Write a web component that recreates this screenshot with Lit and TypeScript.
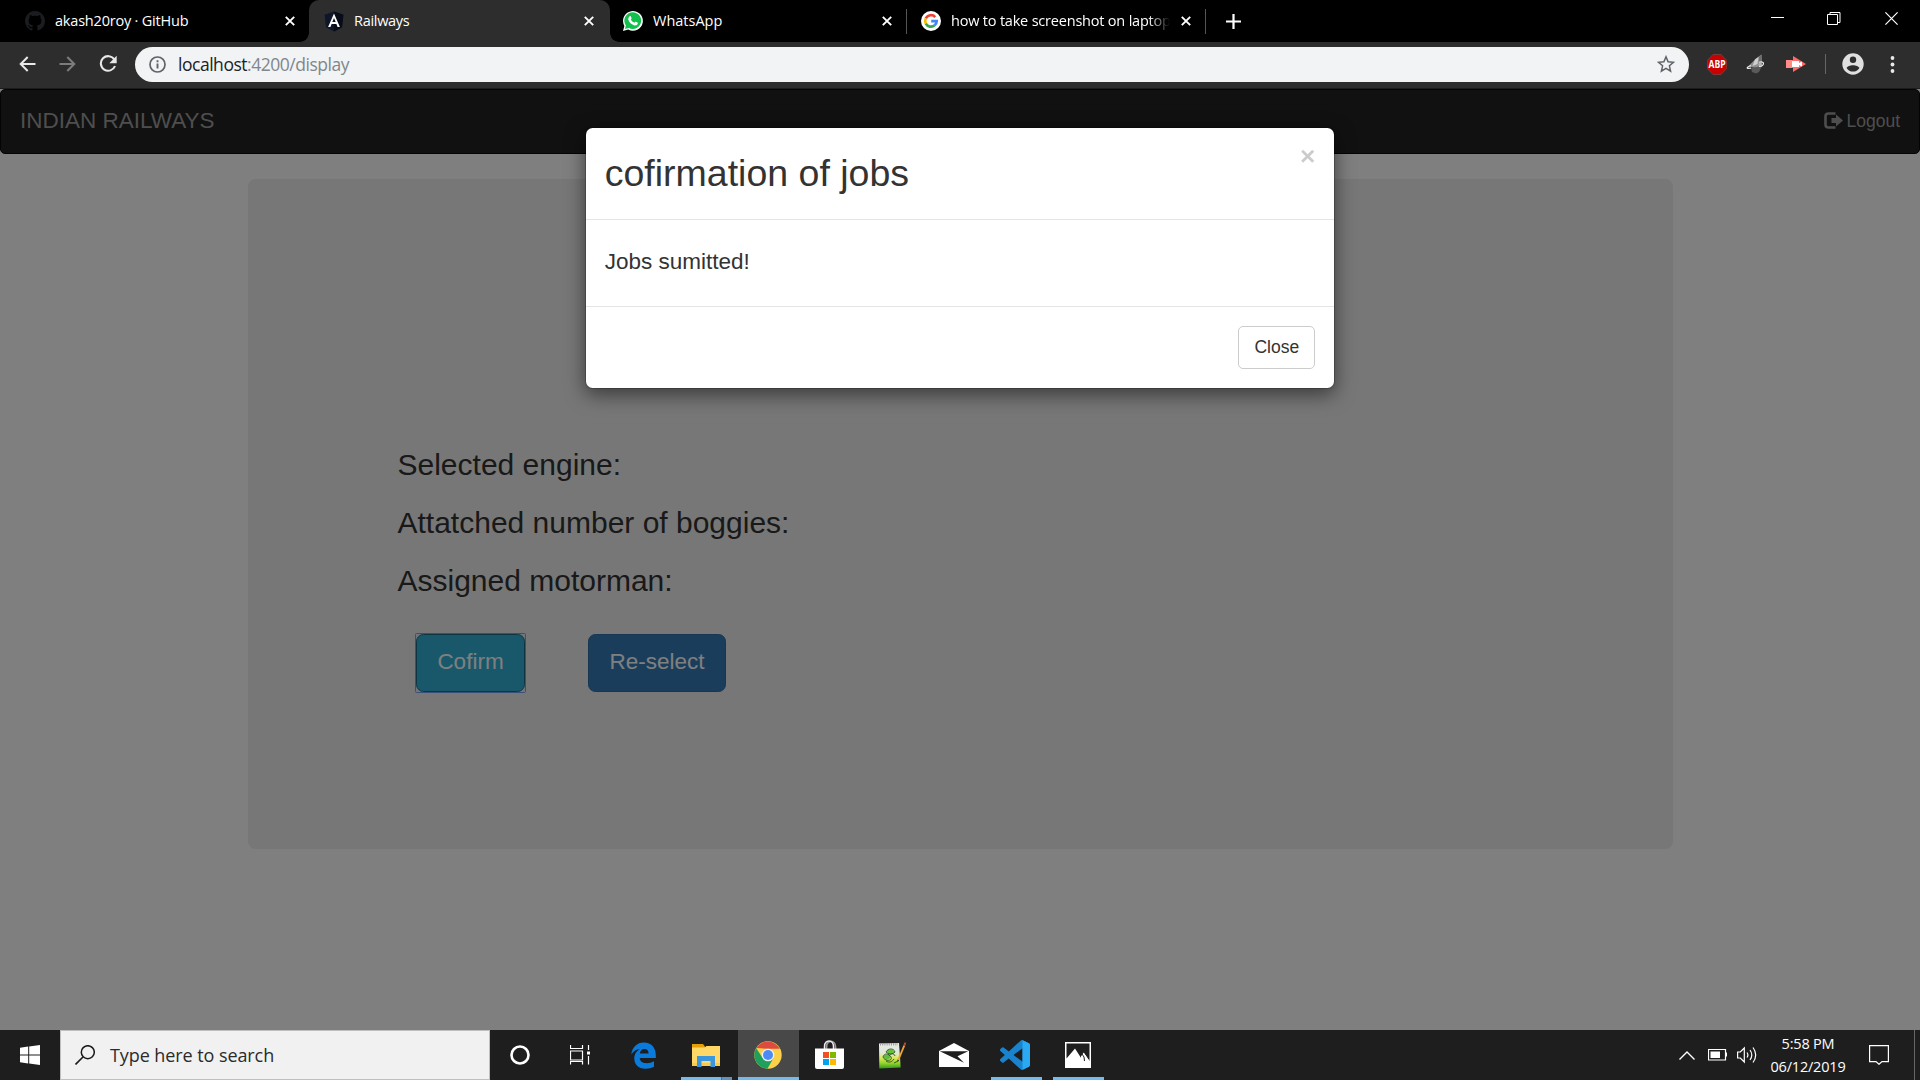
import { LitElement, html, css, svg, TemplateResult } from "lit";
import { customElement } from "lit/decorators.js";

const icon = (w: number, h: number, body: TemplateResult, box = `0 0 ${w} ${h}`) =>
  html`<svg width=${w} height=${h} viewBox=${box} fill="none">${body}</svg>`;

const tabClose = () =>
  icon(10, 10, svg`<path d="M.8.8l8.4 8.4M9.2.8L.8 9.2" stroke="#fff" stroke-width="1.9"/>`);

const githubIcon = () =>
  icon(20, 20, svg`<path fill="#1b1c1f" fill-rule="evenodd" d="M8 0C3.58 0 0 3.58 0 8c0 3.54 2.29 6.53 5.47 7.59.4.07.55-.17.55-.38 0-.19-.01-.82-.01-1.49-2.01.37-2.53-.49-2.69-.94-.09-.23-.48-.94-.82-1.13-.28-.15-.68-.52-.01-.53.63-.01 1.08.58 1.23.82.72 1.21 1.87.87 2.33.66.07-.52.28-.87.51-1.07-1.78-.2-3.64-.89-3.64-3.95 0-.87.31-1.59.82-2.15-.08-.2-.36-1.02.08-2.12 0 0 .67-.21 2.2.82.64-.18 1.32-.27 2-.27s1.36.09 2 .27c1.53-1.04 2.2-.82 2.2-.82.44 1.1.16 1.92.08 2.12.51.56.82 1.27.82 2.15 0 3.07-1.87 3.75-3.65 3.95.29.25.54.73.54 1.48 0 1.07-.01 1.93-.01 2.2 0 .21.15.46.55.38A8.01 8.01 0 0 0 16 8c0-4.42-3.58-8-8-8z"/>`, "0 0 16 16");

const angularIcon = () =>
  icon(20, 21, svg`<path fill="#10162a" d="M10 .5L.6 3.8 2 16.2l8 4.3 8-4.3 1.4-12.4z"/><path fill="#080b18" d="M10 .5v20l8-4.3 1.4-12.4z"/><path fill="#fff" fill-rule="evenodd" d="M10 2.6L4.1 16h2.3l1.2-3h4.8l1.2 3h2.3zm0 4.3l1.7 4.2H8.3z"/>`);

const whatsappIcon = () =>
  icon(20, 20, svg`<path fill="#fff" d="M0 20l1.4-5.1A9.9 9.9 0 1 1 5.2 18.6z"/><path fill="#12c14b" d="M1.9 18.1l1-3.6a8.4 8.4 0 1 1 3 2.6z"/><path fill="#fff" d="M6.7 5.3c.3-.3.9-.4 1.1.1l.8 1.9c.1.5-.5 1-.8 1.3.8 1.5 1.9 2.5 3.5 3.2.4-.4.8-1.2 1.3-1.1l1.9.9c.5.3.3 1.2 0 1.7-.8 1.2-2.3 1.4-3.6.9-2.6-.9-4.5-2.7-5.5-5.2-.4-1.3.2-2.9 1.3-3.7z"/>`);

const googleIcon = () =>
  icon(20, 20, svg`<circle cx="10" cy="10" r="10" fill="#fff"/><g stroke-width="2.7"><path stroke="#ea4335" d="M14.3 6.1A5.8 5.8 0 0 0 4.8 7.4"/><path stroke="#fbbc05" d="M4.8 7.4a5.8 5.8 0 0 0 0 5.2"/><path stroke="#34a853" d="M4.8 12.6a5.8 5.8 0 0 0 8.9 1.7"/><path stroke="#4285f4" d="M13.7 14.3c1.3-1.1 2-2.5 2-4.2H10.2"/></g>`);

const chromeIcon = () =>
  icon(28, 28, svg`<circle cx="14" cy="14" r="13.7" fill="#fdd04a"/><path fill="#dd4b3e" d="M2.2 7A13.7 13.7 0 0 1 25.9 7.8H14z"/><path fill="#1fa15d" d="M2.2 7A13.7 13.7 0 0 0 13.4 27.7L19.4 17.2 8.6 17z"/><circle cx="14" cy="14" r="6.3" fill="#f1f1f1"/><circle cx="14" cy="14" r="5" fill="#4c8bf5"/>`);

const edgeIcon = () =>
  icon(25, 27, svg`<path fill="#0a7bdb" fill-rule="evenodd" d="M.3 12.4C1.2 5.3 6 .5 12.8.5 20.5.5 24.8 6 24.8 12.9v3.2H8.7c.2 3.6 3.3 5.2 7 5.2 2.7 0 5.2-.8 7.3-2v5.5c-2.2 1.2-5.2 1.9-8.6 1.9C7.2 26.7 3.3 22.1 3.3 16.5c0-4.2 2.2-7.7 5.8-9.5C5.5 7.3 2.4 9.2.3 12.4zM8.8 11.5h8.8c0-2.7-1.3-4.6-4.2-4.6-2.6 0-4.2 2-4.6 4.6z"/>`);

const explorerIcon = () =>
  icon(28, 24, svg`<path fill="#e3a008" d="M0 1h11l2 2.5V6H0z"/><path fill="#ffd868" d="M0 4.5h12.5L14.5 3H28v20H0z"/><path fill="#f7cb4d" d="M0 20h28v3H0z"/><path fill="#3a96dd" d="M5 24V13h18v11h-4.5v-6h-9v6z"/>`);

const storeIcon = () =>
  icon(29, 30, svg`<path stroke="#999" stroke-width="1.8" d="M11.5 9V7c0-8 9-7 9 0v2"/><path stroke="#eee" stroke-width="1.5" d="M9.5 9V6.5C9.5-1 18.5-.5 18.5 6.5V9"/><path fill="#fff" d="M0 8.5h29V27q0 2-2 2H2q-2 0-2-2z"/><path fill="#f25022" d="M8 12h6v6H8z"/><path fill="#7fba00" d="M15 12h6v6h-6z"/><path fill="#00a4ef" d="M8 19h6v6H8z"/><path fill="#ffb900" d="M15 19h6v6h-6z"/>`);

const notepadIcon = () =>
  icon(28, 28, svg`<defs><linearGradient id="np" x1="0" y1="0" x2="0" y2="1"><stop offset="0" stop-color="#e9ebe9"/><stop offset=".4" stop-color="#dfe8d6"/><stop offset=".58" stop-color="#dcea5a"/><stop offset=".8" stop-color="#8fd32c"/><stop offset="1" stop-color="#2f9a1c"/></linearGradient></defs><path fill="url(#np)" d="M1 2.5l20-.5 1.7 24.5L1.3 27.5z"/><path stroke="#9a9a9a" stroke-dasharray="1 1.2" stroke-width="2.6" d="M2 3.3h18"/><ellipse cx="12.5" cy="10.5" rx="3.5" ry="2" fill="#5fc23a"/><ellipse cx="9" cy="16" rx="3.2" ry="2.4" fill="#63bd3c"/><path stroke="#2b4a22" stroke-width=".9" d="M8 11c2-4 8-4 9 0-3 3-7 2-9 0zM5 16c1-4 6-4 8 0s-6 5-8 0zM11 15c2-3 5-3 6 0M8 20c3 2 6 1 8-2M16 22l3-1.5"/><path stroke="#eda53a" stroke-width="1.9" d="M20.3 19l6-14.500"/><path stroke="#b8493e" stroke-width="2" d="M26.3 4.5L27.5 1.5"/><path fill="#2b2b2b" d="M19.4 18.6l1.8.8-2 2z"/>`);

const mailIcon = () =>
  icon(30, 24, svg`<path fill="#fff" d="M0 8L15 0l15 8v16H0z"/><path fill="#1e1e1e" d="M.8 8.3h28.4l-10.7 4.9L25 19.8z"/>`);

const vscodeIcon = () =>
  icon(30, 30, svg`<path fill="#1a83cd" d="M23.15 2.587L18.21.21a1.494 1.494 0 0 0-1.705.29l-9.46 8.63-4.12-3.128a.999.999 0 0 0-1.276.057L.327 7.261A1 1 0 0 0 .326 8.74L3.899 12 .326 15.26a1 1 0 0 0 .001 1.479L1.65 17.94a.999.999 0 0 0 1.276.057l4.12-3.128 9.46 8.63a1.492 1.492 0 0 0 1.704.29l4.942-2.377A1.5 1.5 0 0 0 24 20.06V3.939a1.5 1.5 0 0 0-.85-1.352zm-5.146 14.861L10.826 12l7.178-5.448v10.896z"/><path fill="#2aa8f2" d="M18 .15l5.15 2.437A1.5 1.5 0 0 1 24 3.939V20.06a1.5 1.5 0 0 1-.85 1.362L18 23.85z"/>`, "0 0 24 24");

const photosIcon = () =>
  icon(26, 26, svg`<path fill="#fff" d="M0 0h26v26H0z"/><path fill="#1e1e1e" d="M1.5 1.5h23v17.6l-5.5-8-3 3.2 2 4.7L10 6.5 1.5 16.5z"/><path fill="#fff" d="M16 15l2.5-4.5 6 8.5V26H14z"/><path stroke="#1e1e1e" stroke-width="1" d="M17 12l2 3 .5 4"/>`);

const TABS = [
  { cls: "t1", icon: githubIcon, title: "akash20roy · GitHub" },
  { cls: "t2 active", icon: angularIcon, title: "Railways" },
  { cls: "t3", icon: whatsappIcon, title: "WhatsApp" },
  { cls: "t4", icon: googleIcon, title: "how to take screenshot on laptop" },
];

@customElement("browser-chrome")
class BrowserChrome extends LitElement {
  static styles = css`
    :host { display: block; font-family: "Open Sans", "Noto Sans", sans-serif; }
    svg { display: block; flex: none; }
    .strip { display: flex; height: 42px; background: #000; color: #fff; }
    .tab { display: flex; align-items: center; box-sizing: border-box; height: 42px; position: relative; }
    .t1 { width: 309px; padding: 0 14px 0 25px; }
    .t2 { width: 301px; padding: 0 16px 0 15px; }
    .t3 { width: 297px; padding: 0 15px 0 13px; }
    .t4 { width: 299px; padding: 0 15px 0 14px; }
    .active { background: #2d2d2d; border-radius: 10px 10px 0 0; }
    .active::before, .active::after {
      content: ""; position: absolute; bottom: 0; width: 9px; height: 9px;
    }
    .active::before { left: -9px; background: radial-gradient(circle at 0 0, transparent 8.5px, #2d2d2d 9px); }
    .active::after { right: -9px; background: radial-gradient(circle at 100% 0, transparent 8.5px, #2d2d2d 9px); }
    .title {
      flex: 1; min-width: 0; margin: 0 11px 1px 10px; overflow: hidden; white-space: nowrap;
      font-size: 14.5px; line-height: 20px; letter-spacing: -0.2px;
    }
    .t2 .title { letter-spacing: -0.3px; }
    .t3 .title { letter-spacing: 0; }
    .t4 .title { mask-image: linear-gradient(90deg, #000 90%, transparent); }
    .sep { width: 1px; height: 25px; margin: 9px 0 0 -1px; background: #555; }
    .plus { margin: 14px 0 0 20px; }
    .controls { margin-left: auto; display: flex; align-items: flex-start; gap: 43px; padding: 12px 22px 0 0; }
    .controls svg:last-child { margin-left: 1px; }
    .bar {
      display: flex; align-items: center; height: 47px; box-sizing: border-box; background: #2d2d2d;
      padding: 0 22px 2px 19px; border-bottom: 1px solid #1c1c1c;
    }
    .fwd { margin-left: 23px; }
    .reload { margin-left: 23px; }
    .omnibox {
      display: flex; align-items: center; box-sizing: border-box; width: 1554px; height: 35px; margin-left: 18px;
      padding: 0 14px; border-radius: 18px; background: #f1f3f5; color: #202124;
    }
    .url { flex: 1; margin: 0 0 0 12px; font-size: 17.5px; line-height: 24px; letter-spacing: -0.47px; }
    .dim { color: #80868b; }
    .ext1 { margin-left: 18px; } .ext2 { margin-left: 19px; } .ext3 { margin-left: 20px; }
    .vsep { width: 1px; height: 20px; margin-left: 19px; background: #666; }
    .user { margin-left: 16px; }
    .dots { margin-left: 26px; }
  `;
  render() {
    return html`
      <div class="strip">
        ${TABS.map((t, i) => html`
          <div class="tab ${t.cls}">${t.icon()}<span class="title">${t.title}</span>${tabClose()}</div>
          ${i > 1 ? html`<div class="sep"></div>` : ""}`)}
        <div class="plus">${icon(15, 15, svg`<path d="M7.5 0v15M0 7.5h15" stroke="#fff" stroke-width="2.2"/>`)}</div>
        <div class="controls">
          ${icon(13, 13, svg`<path d="M0 5.5h13" stroke="#fff"/>`)}
          ${icon(14, 13, svg`<path d="M.5 2.5h10v10H.5zM3 2.5V.5h10v10h-2.5" stroke="#fff"/>`)}
          ${icon(13, 13, svg`<path d="M.4.4l12.2 12.2M12.6.4L.4 12.6" stroke="#fff" stroke-width="1.2"/>`)}
        </div>
      </div>
      <div class="bar">
        ${icon(17, 16, svg`<path d="M16.5 8H2M8.7 1L1.7 8l7 7" stroke="#e8e8e8" stroke-width="2"/>`)}
        <div class="fwd">${icon(17, 16, svg`<path d="M.5 8H15M8.3 1l7 7-7 7" stroke="#7c7c7c" stroke-width="2"/>`)}</div>
        <div class="reload">${icon(18, 18, svg`<path d="M15.3 4.5A7.3 7.3 0 1 0 16 11" stroke="#e8e8e8" stroke-width="2.1"/><path d="M17.7.8v7.4h-7.4z" fill="#e8e8e8"/>`)}</div>
        <div class="omnibox">
          ${icon(17, 17, svg`<circle cx="8.5" cy="8.5" r="7.5" stroke="#5f6368" stroke-width="1.7"/><path d="M8.5 7.5v5M8.5 4.2v2" stroke="#5f6368" stroke-width="1.9"/>`)}
          <span class="url">localhost<span class="dim">:4200/display</span></span>
          ${icon(18, 18, svg`<path d="M9 1.8l2.1 5 5.4.5-4.1 3.5 1.2 5.3L9 13.3l-4.6 2.8 1.2-5.3L1.5 7.3l5.4-.5z" stroke="#5f6368" stroke-width="1.5"/>`)}
        </div>
        <div class="ext1">${icon(20, 21, svg`<path fill="#c90000" stroke="#7c5050" stroke-width=".6" d="M6 .5h8l5.7 6v8l-5.700 6H6L.3 14.5v-8z"/><text transform="translate(10 14.3) scale(.78 1)" text-anchor="middle" font-family="Open Sans" font-weight="700" font-size="11" fill="#fff">ABP</text>`)}</div>
        <div class="ext2">${icon(20, 20, svg`<path fill="#8f8f8f" d="M2 12.5L10 4.5 15.5.5l.5 9-4 5z"/><path fill="#d0d0d0" d="M9 5.5l3.5-2.5-1 7-5 2z"/><path fill="#6e6e6e" d="M13 3l2.5-2.5.5 9-3 1z"/><path fill="#5a5a5a" d="M5 14l11-2-3 6-3 1.5L6 18z"/><path stroke="#f0f0f0" stroke-width="1.2" d="M5 11.500C2 12.500 0 14.200 2 14.500l3-.3M13 8.200c3-1 5.500.2 4 2.600-1 1.200-2.500 1.700-4 1.700"/><circle cx="14.200" cy="10.400" r="1.7" fill="#b5b5b5"/>`)}</div>
        <div class="ext3">${icon(20, 18, svg`<path fill="#ff6b6b" d="M0 5h7V1l13 8L7 17v-4H0z"/><path fill="#ff8a86" d="M0 5h6v8H0z"/><path fill="#fff" d="M6 6h7v2l3-1.5v5L13 10v2H6z"/>`)}</div>
        <div class="vsep"></div>
        <div class="user">${icon(22, 22, svg`<path fill="#dfdfdf" fill-rule="evenodd" d="M11 .3a10.7 10.7 0 1 1 0 21.4A10.7 10.7 0 0 1 11 .3zm0 3.2a3.2 3.2 0 1 0 0 6.4 3.2 3.2 0 0 0 0-6.4zm0 8.7c-2.6 0-6 1.2-6.4 2.9a7.6 7.6 0 0 0 12.8 0c-.4-1.7-3.8-2.9-6.4-2.9z"/>`)}</div>
        <div class="dots">${icon(5, 17, svg`<g fill="#e8e8e8"><circle cx="2.5" cy="2" r="1.9"/><circle cx="2.5" cy="8.5" r="1.9"/><circle cx="2.5" cy="15" r="1.9"/></g>`)}</div>
      </div>`;
  }
}

@customElement("railway-page")
class RailwayPage extends LitElement {
  static styles = css`
    :host {
      display: block; position: relative; height: 941px; overflow: hidden; background: #fff; color: #333;
      font-family: "Liberation Sans", Arial, sans-serif; font-size: 17.5px; line-height: 25px;
    }
    svg { display: block; }
    .navbar {
      display: flex; justify-content: space-between; align-items: center; box-sizing: border-box; height: 65px;
      padding: 0 19px; background: #222; border: 1px solid #080808; border-radius: 5px; color: #9d9d9d;
    }
    .brand { font-size: 22.5px; margin-bottom: 2px; }
    .logout { display: flex; align-items: center; gap: 3px; }
    .logout svg { margin-bottom: 2px; }
    .jumbotron {
      box-sizing: border-box; width: 1425px; height: 670px; margin: 25px 0 0 247.5px; padding: 269px 0 0 150px;
      border-radius: 7.5px; background: #eee;
    }
    h3 { margin: 0 0 25px; font-size: 30px; line-height: 33px; font-weight: 500; }
    .actions { display: flex; align-items: center; gap: 62px; padding: 11px 0 0 17.5px; }
    .ring { display: flex; border: 1px solid #76a0f0; border-radius: 1.5px; background: #e4eaf5; }
    .btn {
      box-sizing: border-box; height: 58px; padding: 0 0 2px; border-radius: 7.5px; border: 1px solid;
      font: 22.5px/30px "Liberation Sans", Arial, sans-serif; color: #fff;
    }
    .info { width: 109px; background: #31b0d5; border-color: #1b6d85; }
    .primary { width: 138px; background: #337ab7; border-color: #2e6da4; }
    .backdrop { position: absolute; inset: 0; background: rgba(0, 0, 0, 0.5); }
    .modal {
      position: absolute; left: 585px; top: 38px; width: 750px; box-sizing: border-box; background: #fff;
      background-clip: padding-box; border: 1px solid rgba(0, 0, 0, 0.2); border-radius: 7.5px;
      box-shadow: 0 6px 19px rgba(0, 0, 0, 0.5);
    }
    .head { display: flex; justify-content: space-between; box-sizing: border-box; height: 92px; padding: 18.75px; border-bottom: 1px solid #e5e5e5; }
    h2 { margin: 6px 0 0; font-size: 37.5px; line-height: 41px; font-weight: 500; }
    .x { margin-top: -4px; font-size: 26.25px; line-height: 26px; font-weight: 700; color: #000; opacity: 0.2; }
    .body { box-sizing: border-box; height: 86px; padding: 29px 18.75px; }
    h4 { margin: 0; font-size: 22.5px; line-height: 25px; font-weight: 500; }
    .foot { display: flex; justify-content: flex-end; box-sizing: border-box; height: 82px; padding: 19px 18.75px; border-top: 1px solid #e5e5e5; }
    .close {
      width: 77px; height: 43px; padding: 0; border: 1px solid #ccc; border-radius: 5px; background: #fff; color: #333;
      font: 17.5px/25px "Liberation Sans", Arial, sans-serif;
    }
  `;
  render() {
    return html`
      <div class="navbar">
        <span class="brand">INDIAN RAILWAYS</span>
        <span class="logout">
          ${icon(19, 17, svg`<path d="M11.5 1.5H4.5Q1.5 1.5 1.5 4.5v8q0 3 3 3h7" stroke="#9d9d9d" stroke-width="2.6"/><path fill="#9d9d9d" d="M7.500 6H12V2.500L19 8.500l-7 6V11H7.500z"/>`)}
          <span>Logout</span>
        </span>
      </div>
      <div class="jumbotron">
        <h3>Selected engine:</h3>
        <h3>Attatched number of boggies:</h3>
        <h3>Assigned motorman:</h3>
        <div class="actions">
          <div class="ring"><button class="btn info">Cofirm</button></div>
          <button class="btn primary">Re-select</button>
        </div>
      </div>
      <div class="backdrop"></div>
      <div class="modal">
        <div class="head"><h2>cofirmation of jobs</h2><span class="x">×</span></div>
        <div class="body"><h4>Jobs sumitted!</h4></div>
        <div class="foot"><button class="close">Close</button></div>
      </div>`;
  }
}

@customElement("task-bar")
class TaskBar extends LitElement {
  static styles = css`
    :host {
      display: flex; height: 50px; background: #1e1e1e; color: #fff;
      font-family: "Open Sans", "Noto Sans", sans-serif;
    }
    svg { display: block; flex: none; }
    .cell {
      position: relative; display: flex; align-items: center; justify-content: center; box-sizing: border-box;
      width: 62px; height: 50px;
    }
    .start, .cortana { width: 60px; }
    .view { width: 63px; padding-right: 4px; }
    .nudge { padding-right: 2px; }
    .search {
      display: flex; align-items: center; box-sizing: border-box; width: 430px; padding: 0 14px; color: #2b2b2b;
      background: #f1f1f1; border: 1px solid #bfbfbf; font-size: 18px; letter-spacing: -0.08px;
    }
    .search span { margin-left: 15px; }
    .on { background: linear-gradient(#484848, #484848) 1px 0 / 61px 50px no-repeat; }
    .line::after {
      content: ""; position: absolute; bottom: 0; left: 6px; width: 51px; height: 3px; background: #76b9ed;
    }
    .multi::after { background: linear-gradient(90deg, #76b9ed 40px, #4a6f8c 40px, #4a6f8c 41px, #5f93bd 41px); }
    .on::after { left: 1px; width: 61px; }
    .tray { display: flex; align-items: center; margin-left: auto; }
    .battery { margin-left: 13px; }
    .sound { margin-left: 10px; }
    .clock {
      width: 100px; text-align: center; font-size: 14.5px; line-height: 23px; letter-spacing: -0.2px;
    }
    .notes { margin-left: 11px; }
    .peek { width: 5px; height: 50px; margin-left: 25px; border-left: 1px solid #666; }
  `;
  render() {
    return html`
      <div class="cell start">${icon(20, 20, svg`<path fill="#fff" d="M0 2.8L8.2 1.6v7.9H0zM9.2 1.5L20 0v9.5H9.2zM0 10.5h8.2v7.9L0 17.2zM9.2 10.5H20V20L9.2 18.5z"/>`)}</div>
      <div class="search">
        ${icon(20, 20, svg`<circle cx="12.8" cy="7.2" r="6.5" stroke="#1a1a1a" stroke-width="1.5"/><path d="M8.2 11.8L.5 19.5" stroke="#1a1a1a" stroke-width="1.6"/>`)}
        <span>Type here to search</span>
      </div>
      <div class="cell cortana">${icon(20, 20, svg`<circle cx="10" cy="10" r="8.5" stroke="#fff" stroke-width="2.6"/>`)}</div>
      <div class="cell view">${icon(20, 20, svg`<path d="M.5 0v3.5h12V0M.5 6h12v9H.5zM.5 19.5v-3h12v3M18.5 0v5M18.5 11v8.5" stroke="#fff" stroke-width="1.2"/><path fill="#fff" d="M17 6.5h3v3h-3z"/>`)}</div>
      <div class="cell nudge">${edgeIcon()}</div>
      <div class="cell line multi">${explorerIcon()}</div>
      <div class="cell line on">${chromeIcon()}</div>
      <div class="cell nudge">${storeIcon()}</div>
      <div class="cell">${notepadIcon()}</div>
      <div class="cell">${mailIcon()}</div>
      <div class="cell line nudge">${vscodeIcon()}</div>
      <div class="cell line">${photosIcon()}</div>
      <div class="tray">
        ${icon(16, 9, svg`<path d="M.5 8.5L8 1l7.5 7.5" stroke="#fff" stroke-width="1.4"/>`)}
        <div class="battery">${icon(19, 12, svg`<path d="M.5.5h17V11H.5z" stroke="#fff" stroke-width="1.2"/><path fill="#fff" d="M2.5 2.5H12V9H2.5zM18 3.5h1v4h-1z"/>`)}</div>
        <div class="sound">${icon(21, 18, svg`<path d="M.6 6h2.7L7.3 2v14l-4-4H.6z" stroke="#fff" stroke-width="1.2"/><path d="M10 6.5q1.8 2.5 0 5M13 4q3.6 5 0 10M16 1.5q5.4 7.5 0 15" stroke="#fff" stroke-width="1.2"/>`)}</div>
        <div class="clock"><div>5:58 PM</div><div>06/12/2019</div></div>
        <div class="notes">${icon(20, 20, svg`<path d="M.6.6h18.8v16H13L10 19.3 7 16.6H.6z" stroke="#fff" stroke-width="1.2"/>`)}</div>
        <div class="peek"></div>
      </div>`;
  }
}

@customElement("app-root")
class AppRoot extends LitElement {
  static styles = css`
    :host { display: block; width: 1920px; height: 1080px; overflow: hidden; }
  `;
  render() {
    return html`<browser-chrome></browser-chrome><railway-page></railway-page><task-bar></task-bar>`;
  }
}
